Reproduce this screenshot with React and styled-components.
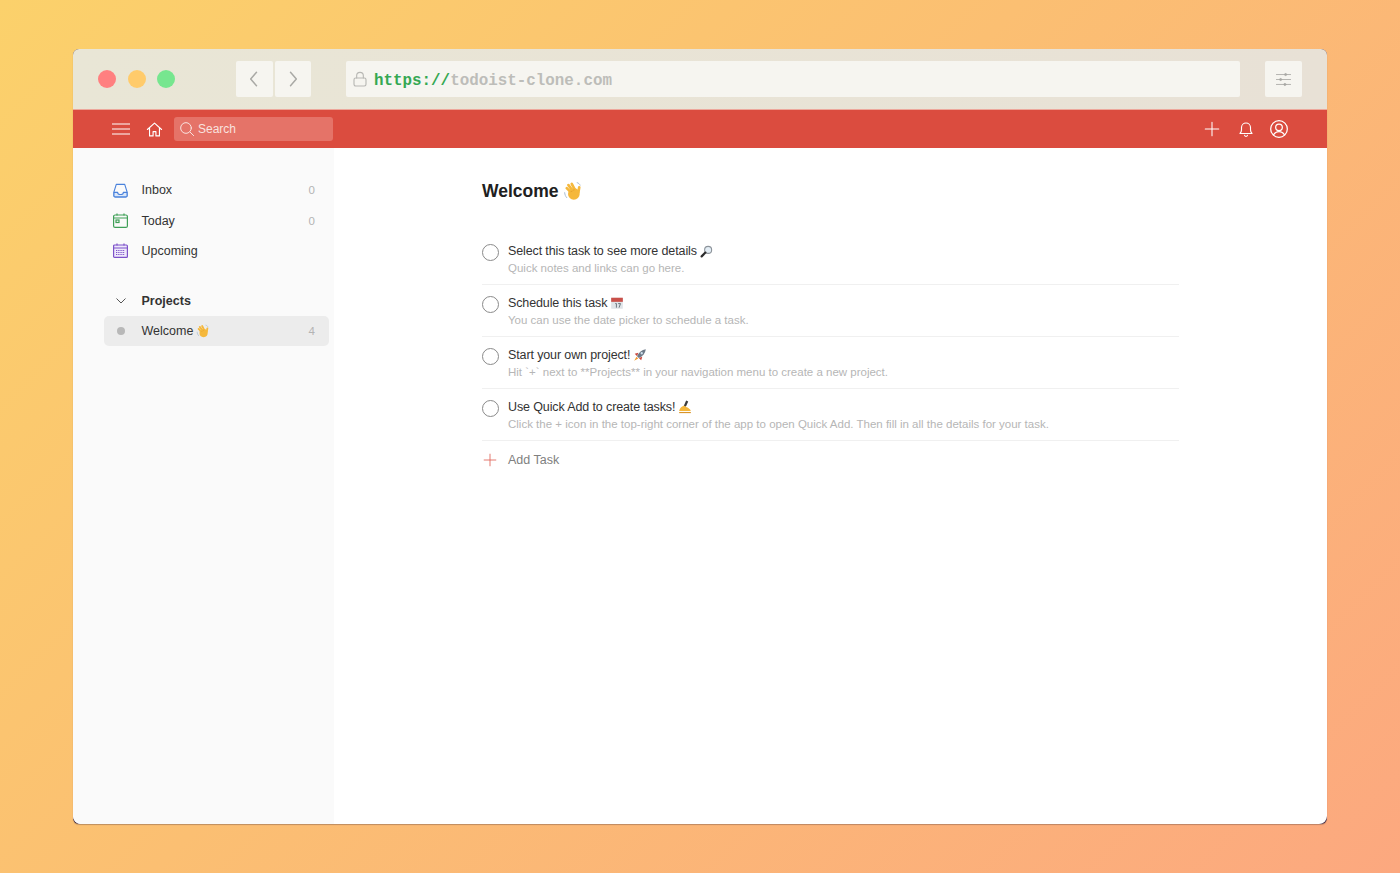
import React from "react";
import styled, { createGlobalStyle } from "styled-components";

const Global = createGlobalStyle`
  html, body { margin: 0; padding: 0; }
  body { font-family: "Liberation Sans", Arial, sans-serif; color: #202020; }
  * { box-sizing: border-box; }
`;

const Page = styled.div`
  height: 873px;
  padding: 49px 73px;
  display: flex;
  overflow: hidden;
  background: linear-gradient(135deg, #fbd16b 0%, #fbbf72 45%, #fca87f 100%);
`;

const Browser = styled.div`
  flex: 1;
  display: flex;
  flex-direction: column;
  border-radius: 6px;
  overflow: hidden;
  background: #3d2c4c;
  box-shadow: 0 1px 1px rgba(110, 80, 70, 0.45);
`;

const Chrome = styled.div`
  height: 61px;
  flex: none;
  display: flex;
  align-items: center;
  padding: 0 25px;
  background: linear-gradient(90deg, #e9e6d6 0%, #e8e1d6 100%);
  border-bottom: 1px solid #eda79b;
`;

const Dot = styled.span`
  width: 18px;
  height: 18px;
  border-radius: 50%;
  margin-right: 11.5px;
  background: ${(p) => p.$color};
`;

const ChromeButton = styled.div`
  width: ${(p) => (p.$wide ? 37 : 36.5)}px;
  height: 36px;
  margin-left: ${(p) => p.$left || 0}px;
  display: flex;
  align-items: center;
  justify-content: center;
  flex: none;
  background: #f6f5f0;
  border-radius: 2px;
  color: #a9a9a5;
`;

const UrlBar = styled.div`
  flex: 1;
  height: 36px;
  margin: 0 25px 0 35px;
  padding-left: 6px;
  display: flex;
  align-items: center;
  background: #f6f5f0;
  border-radius: 2px;
  color: #b8b8b4;
`;

const Url = styled.span`
  margin-left: 6px;
  padding-top: 3px;
  font-family: "Liberation Mono", "Courier New", monospace;
  font-size: 15.87px;
  font-weight: 700;
  color: #bdbdb9;
`;

const Scheme = styled.span`
  color: #35a853;
`;

const AppBar = styled.div`
  height: 38px;
  flex: none;
  display: flex;
  align-items: center;
  padding: 0 38px 0 39px;
  background: #db4c3f;
  color: #fff;
`;

const BarIcon = styled.span`
  display: flex;
  align-items: center;
  margin-left: ${(p) => p.$left || 0}px;
  color: #fff;
`;

const SearchBox = styled.div`
  width: 159px;
  height: 24px;
  margin-left: 11px;
  padding-left: 5px;
  display: flex;
  align-items: center;
  gap: 3px;
  border-radius: 3px;
  background: #e57368;
  font-size: 12px;
  color: #f9e2df;
`;

const Spacer = styled.div`
  flex: 1;
`;

const Body = styled.div`
  flex: 1;
  min-height: 0;
  display: flex;
  background: #fff;
  border-radius: 0 0 8px 8px;
  overflow: hidden;
`;

const Sidebar = styled.aside`
  width: 261px;
  flex: none;
  padding: 27px 5px 0 31px;
  background: #fafafa;
`;

const NavRow = styled.div`
  height: 30.4px;
  display: flex;
  align-items: center;
  padding: ${(p) => (p.$bold ? "1px" : "0")} 14px 0 9px;
  border-radius: 5px;
  font-size: 12.5px;
  color: #333;
  background: ${(p) => (p.$active ? "#ececec" : "transparent")};
  font-weight: ${(p) => (p.$bold ? 700 : 400)};
`;

const NavIcon = styled.span`
  width: 15px;
  height: 16px;
  flex: none;
  display: flex;
  align-items: center;
  justify-content: center;
  margin-right: 13.5px;
`;

const NavLabel = styled.span`
  flex: 1;
  display: flex;
  align-items: center;
  gap: 3px;
`;

const Count = styled.span`
  font-size: 11.5px;
  color: #b4b4b4;
`;

const SectionGap = styled.div`
  height: 19.4px;
`;

const ProjectDot = styled.span`
  width: 8px;
  height: 8px;
  border-radius: 50%;
  background: #b8b8b8;
`;

const Main = styled.main`
  flex: 1;
  padding: 31px 148px 0 148px;
`;

const Title = styled.h1`
  margin: 0 0 30px;
  height: 24px;
  display: flex;
  align-items: center;
  gap: 4px;
  font-size: 17.5px;
  font-weight: 700;
  color: #202020;
`;

const Task = styled.div`
  height: 52px;
  display: flex;
  padding-top: 10px;
  border-bottom: 1px solid #f0f0f0;
`;

const Check = styled.span`
  width: 17px;
  height: 17px;
  flex: none;
  margin: 1px 9px 0 0;
  border-radius: 50%;
  border: 1px solid #8a8a8a;
`;

const TaskTitle = styled.div`
  height: 16px;
  display: flex;
  align-items: center;
  gap: 3px;
  font-size: 12.5px;
  letter-spacing: -0.12px;
  color: #333;
`;

const TaskNote = styled.div`
  height: 18px;
  line-height: 18px;
  font-size: 11.5px;
  color: #b6b6b6;
`;

const AddTask = styled.div`
  height: 36px;
  padding-top: 1px;
  display: flex;
  align-items: center;
  font-size: 12.5px;
  color: #808080;
`;

const AddIcon = styled.span`
  width: 26px;
  padding-left: 1px;
  display: flex;
  color: #e0675b;
`;

const Stroke = ({ size = 18, width = 1.2, vb = 24, children }) => (
  <svg
    width={size}
    height={size}
    viewBox={`0 0 ${vb} ${vb}`}
    fill="none"
    stroke="currentColor"
    strokeWidth={width}
    strokeLinecap="round"
    strokeLinejoin="round"
  >
    {children}
  </svg>
);

const Wave = ({ size = 14 }) => (
  <svg width={size} height={size} viewBox="0 0 24 24">
    <g fill="none" stroke="#f5b83c" strokeLinecap="round">
      <path d="M9 13L4.500 8.500" strokeWidth="3.200" />
      <path d="M11 11L6.500 5" strokeWidth="3.200" />
      <path d="M14 10L10.500 3.500" strokeWidth="3.200" />
      <path d="M18.500 13.500L19.500 7.500" strokeWidth="3.200" />
    </g>
    <circle cx="13" cy="15.500" r="7" fill="#f5b83c" />
    <path d="M9 13l2.500-1M12 11l2-.5" stroke="#dd9526" strokeWidth=".7" fill="none" />
    <path d="M2 14c.2 2.500 1 4.500 2.500 6M17 2c1.500.3 3 1.500 3.500 3" fill="none" stroke="#a9bcd0" strokeWidth="1.200" strokeLinecap="round" />
  </svg>
);

const Magnifier = () => (
  <svg width="13" height="13" viewBox="0 0 24 24">
    <circle cx="15" cy="9" r="6.500" fill="#e3edf5" stroke="#8d949b" strokeWidth="2" />
    <path d="M10 14L3 21" stroke="#2c2c2c" strokeWidth="4" strokeLinecap="round" />
  </svg>
);

const CalendarEmoji = () => (
  <svg width="14" height="14" viewBox="0 0 24 24">
    <rect x="2" y="3" width="20" height="19" rx="1" fill="#dfe4e8" />
    <rect x="2" y="3" width="20" height="7" fill="#c9504a" />
    <path d="M9 13h2v7M14 13h4l-2.500 7" fill="none" stroke="#5b6770" strokeWidth="1.500" />
  </svg>
);

const Rocket = () => (
  <svg width="14" height="14" viewBox="0 0 24 24">
    <path d="M7 14L3 10l6-2zM10 17l4 4 2-6z" fill="#c9443c" />
    <path d="M7 14C10 7 15 3 22 2c-1 7-5 12-12 15z" fill="#6d7a88" />
    <circle cx="15" cy="9" r="2" fill="#cfe0ee" />
    <path d="M6 15l3 3-7 4z" fill="#f09a2e" />
  </svg>
);

const WritingHand = () => (
  <svg width="14" height="14" viewBox="0 0 24 24">
    <path d="M14 1l3.500 1.500-4 9-3.500-1.500z" fill="#3b3b3b" />
    <path d="M2 19c1-5 5-9 9-9l3 2c3 1 7 3 8 7H2z" fill="#f4b63a" />
    <path d="M2 21.500h20" stroke="#d9952a" strokeWidth="2" />
  </svg>
);

const tasks = [
  ["Select this task to see more details", <Magnifier />, "Quick notes and links can go here."],
  ["Schedule this task", <CalendarEmoji />, "You can use the date picker to schedule a task."],
  ["Start your own project!", <Rocket />, "Hit `+` next to **Projects** in your navigation menu to create a new project."],
  ["Use Quick Add to create tasks!", <WritingHand />, "Click the + icon in the top-right corner of the app to open Quick Add. Then fill in all the details for your task."],
];

export default function App() {
  return (
    <Page>
      <Global />
      <Browser>
        <Chrome>
          <Dot $color="#ff8080" />
          <Dot $color="#ffcb6b" />
          <Dot $color="#77e68f" />
          <ChromeButton $left={49.5}>
            <Stroke size={20} width={1.8}>
              <path d="M15 4l-7 8 7 8" />
            </Stroke>
          </ChromeButton>
          <ChromeButton $left={2}>
            <Stroke size={20} width={1.8}>
              <path d="M9 4l7 8-7 8" />
            </Stroke>
          </ChromeButton>
          <UrlBar>
            <Stroke size={16} width={1.7}>
              <rect x="3" y="10.500" width="18" height="12" rx="2.500" />
              <path d="M7 10.500V7a5 5 0 0 1 10 0v3.500" />
            </Stroke>
            <Url>
              <Scheme>https://</Scheme>todoist-clone.com
            </Url>
          </UrlBar>
          <ChromeButton $wide>
            <Stroke size={17} width={1.2}>
              <path d="M2 5h20M2 12h20M2 19h20" />
              <circle cx="15" cy="5" r="1.500" fill="currentColor" />
              <circle cx="8" cy="12" r="1.500" fill="currentColor" />
              <circle cx="14" cy="19" r="1.500" fill="currentColor" />
            </Stroke>
          </ChromeButton>
        </Chrome>
        <AppBar>
          <BarIcon>
            <svg width="18" height="12" viewBox="0 0 18 12" fill="none" stroke="currentColor" strokeWidth="1">
              <path d="M0 1h18M0 6h18M0 11h18" />
            </svg>
          </BarIcon>
          <BarIcon $left={16}>
            <Stroke size={17} width={1.600}>
              <path d="M2 12L12 3l10 9" />
              <path d="M5 10v11h5v-6h4v6h5V10" />
            </Stroke>
          </BarIcon>
          <SearchBox>
            <Stroke size={16} width={1.500}>
              <circle cx="10.500" cy="10.500" r="8" />
              <path d="M16.500 16.500L22 22" />
            </Stroke>
            Search
          </SearchBox>
          <Spacer />
          <BarIcon>
            <Stroke size={18} width={1.400}>
              <path d="M12 3v18M3 12h18" />
            </Stroke>
          </BarIcon>
          <BarIcon $left={16}>
            <Stroke size={18} width={1.500}>
              <path d="M4 18c1.500-1.500 2-3 2-5v-3a6 6 0 0 1 12 0v3c0 2 .5 3.500 2 5z" />
              <path d="M10 20.500a2.200 2.200 0 0 0 4 0" />
            </Stroke>
          </BarIcon>
          <BarIcon $left={14}>
            <Stroke size={20} width={1.500}>
              <circle cx="12" cy="12" r="10" />
              <circle cx="12" cy="10" r="4" />
              <path d="M5.500 19c1.500-3 4-4 6.500-4s5 1 6.500 4" />
            </Stroke>
          </BarIcon>
        </AppBar>
        <Body>
          <Sidebar>
            <NavRow>
              <NavIcon>
                <svg width="16" height="15" viewBox="0 0 16 15" fill="#dbe7f8" stroke="#4a82dc" strokeWidth="1.200" strokeLinejoin="round">
                  <path d="M3.500 1h9L15 9v4a1.300 1.300 0 0 1-1.300 1.300H2.300A1.300 1.300 0 0 1 1 13V9z" fill="none" />
                  <path d="M1 9.500h4c0 1.500 1.300 2.300 3 2.300s3-.8 3-2.300h4V13a1.300 1.300 0 0 1-1.300 1.300H2.300A1.300 1.300 0 0 1 1 13z" />
                </svg>
              </NavIcon>
              <NavLabel>Inbox</NavLabel>
              <Count>0</Count>
            </NavRow>
            <NavRow>
              <NavIcon>
                <svg width="15" height="15" viewBox="0 0 15 15" fill="none" stroke="#3f9f57" strokeWidth="1.200">
                  <rect x=".6" y="2" width="13.800" height="12.400" rx="1.500" />
                  <path d="M.6 5h13.800" />
                  <path d="M4 .5v2M11 .5v2" />
                  <rect x="3" y="7" width="3" height="2.500" />
                </svg>
              </NavIcon>
              <NavLabel>Today</NavLabel>
              <Count>0</Count>
            </NavRow>
            <NavRow>
              <NavIcon>
                <svg width="15" height="15" viewBox="0 0 15 15" fill="#efe9fb" stroke="#7d52c9" strokeWidth="1.200">
                  <rect x=".6" y="2" width="13.800" height="12.400" rx="1" />
                  <path d="M.6 5h13.800" />
                  <path d="M4 .5v2M11 .5v2" />
                  <path d="M3 7.500h9M3 9.500h9M3 11.500h9" strokeDasharray="1.300 .9" />
                </svg>
              </NavIcon>
              <NavLabel>Upcoming</NavLabel>
            </NavRow>
            <SectionGap />
            <NavRow $bold>
              <NavIcon>
                <svg width="10" height="6" viewBox="0 0 10 6" fill="none" stroke="#555" strokeWidth="1">
                  <path d="M.5.5L5 5 9.500.5" />
                </svg>
              </NavIcon>
              <NavLabel>Projects</NavLabel>
            </NavRow>
            <NavRow $active>
              <NavIcon>
                <ProjectDot />
              </NavIcon>
              <NavLabel>
                Welcome <Wave />
              </NavLabel>
              <Count>4</Count>
            </NavRow>
          </Sidebar>
          <Main>
            <Title>
              Welcome <Wave size={20} />
            </Title>
            {tasks.map(([title, emoji, note]) => (
              <Task key={title}>
                <Check />
                <div>
                  <TaskTitle>
                    {title} {emoji}
                  </TaskTitle>
                  <TaskNote>{note}</TaskNote>
                </div>
              </Task>
            ))}
            <AddTask>
              <AddIcon>
                <Stroke size={14} width={1.500}>
                  <path d="M12 2v20M2 12h20" />
                </Stroke>
              </AddIcon>
              Add Task
            </AddTask>
          </Main>
        </Body>
      </Browser>
    </Page>
  );
}
